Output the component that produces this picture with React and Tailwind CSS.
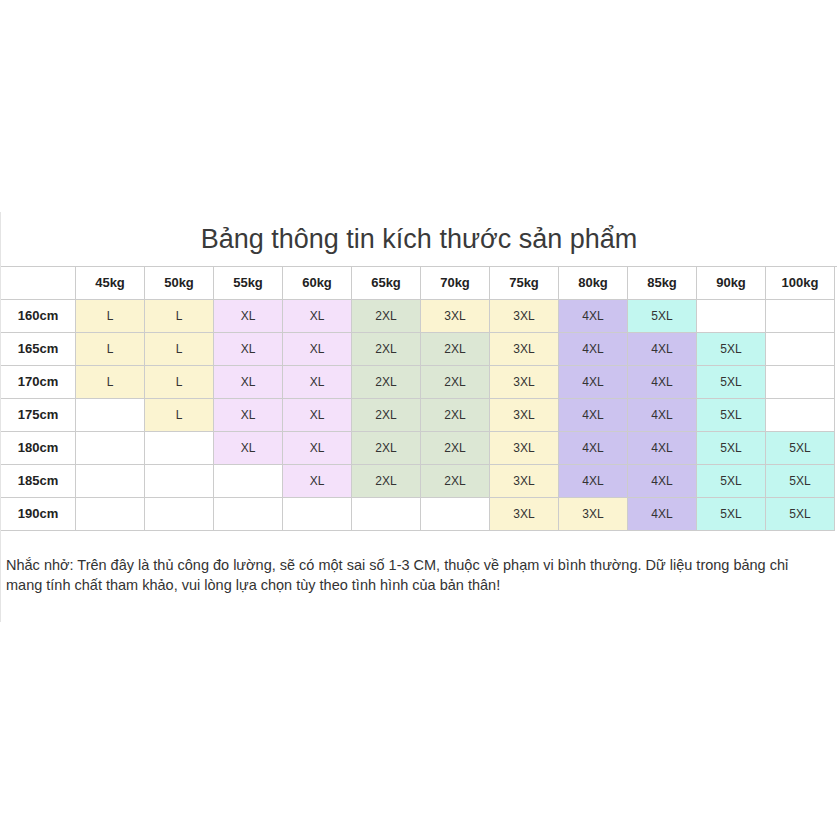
import React from "react";

const weights = ["45kg", "50kg", "55kg", "60kg", "65kg", "70kg", "75kg", "80kg", "85kg", "90kg", "100kg"];

const colors = {
  y: "bg-[#fbf4d1]",
  p: "bg-[#f4e1fa]",
  g: "bg-[#dce7d4]",
  v: "bg-[#ccc3ef]",
  c: "bg-[#c2f7f0]",
};

// each cell: [text, colour key] or null
const rows = [
  ["160cm", [["L", "y"], ["L", "y"], ["XL", "p"], ["XL", "p"], ["2XL", "g"], ["3XL", "y"], ["3XL", "y"], ["4XL", "v"], ["5XL", "c"], null, null]],
  ["165cm", [["L", "y"], ["L", "y"], ["XL", "p"], ["XL", "p"], ["2XL", "g"], ["2XL", "g"], ["3XL", "y"], ["4XL", "v"], ["4XL", "v"], ["5XL", "c"], null]],
  ["170cm", [["L", "y"], ["L", "y"], ["XL", "p"], ["XL", "p"], ["2XL", "g"], ["2XL", "g"], ["3XL", "y"], ["4XL", "v"], ["4XL", "v"], ["5XL", "c"], null]],
  ["175cm", [null, ["L", "y"], ["XL", "p"], ["XL", "p"], ["2XL", "g"], ["2XL", "g"], ["3XL", "y"], ["4XL", "v"], ["4XL", "v"], ["5XL", "c"], null]],
  ["180cm", [null, null, ["XL", "p"], ["XL", "p"], ["2XL", "g"], ["2XL", "g"], ["3XL", "y"], ["4XL", "v"], ["4XL", "v"], ["5XL", "c"], ["5XL", "c"]]],
  ["185cm", [null, null, null, ["XL", "p"], ["2XL", "g"], ["2XL", "g"], ["3XL", "y"], ["4XL", "v"], ["4XL", "v"], ["5XL", "c"], ["5XL", "c"]]],
  ["190cm", [null, null, null, null, null, null, ["3XL", "y"], ["3XL", "y"], ["4XL", "v"], ["5XL", "c"], ["5XL", "c"]]],
];

const cell = "h-[33px] flex items-center justify-center border-r border-b border-[#cccccc]";

const App = () => {
  return (
    <div className="w-[837px] h-[837px] bg-white pt-[212px] font-['Liberation_Sans',Arial,sans-serif] text-[#333]">
      <div className="h-[410px] border-l border-[#e4e4e4]">
        <div className="h-[54px] pt-px flex items-center justify-center text-[27px] text-[#3a3a3a]">
          Bảng thông tin kích thước sản phẩm
        </div>
        <div className="grid grid-cols-[75px_repeat(11,69px)] border-t border-[#cccccc]">
          <div className={cell}></div>
          {weights.map((w) => (
            <div key={w} className={`${cell} text-[13px] font-bold text-[#222]`}>
              {w}
            </div>
          ))}
          {rows.map(([h, cells]) => (
            <React.Fragment key={h}>
              <div className={`${cell} text-[13px] font-bold text-[#222]`}>{h}</div>
              {cells.map((c, i) =>
                c ? (
                  <div key={i} className={`${cell} ${colors[c[1]]} text-[12px] text-[#333]`}>
                    {c[0]}
                  </div>
                ) : (
                  <div key={i} className={cell}></div>
                )
              )}
            </React.Fragment>
          ))}
        </div>
        <p className="mt-[24px] pl-[5px] max-w-[815px] text-[14.5px] leading-[20px] text-[#333]">
          Nhắc nhở: Trên đây là thủ công đo lường, sẽ có một sai số 1-3 CM, thuộc về phạm vi bình thường. Dữ liệu trong bảng chỉ mang tính chất tham khảo, vui lòng lựa chọn tùy theo tình hình của bản thân!
        </p>
      </div>
    </div>
  );
};

export default App;
